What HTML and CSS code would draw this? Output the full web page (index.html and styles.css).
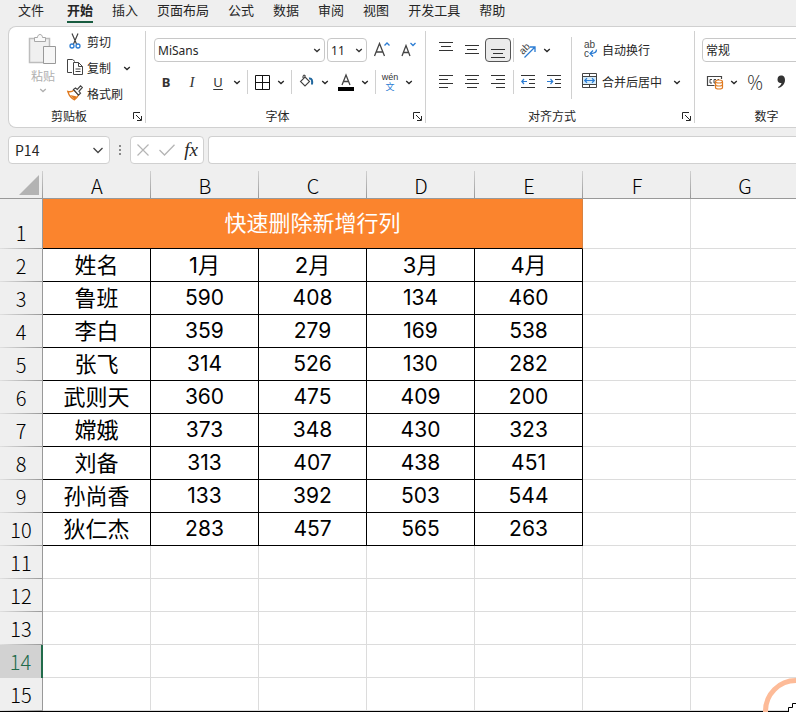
FILE: index.html
```html
<!DOCTYPE html>
<html lang="zh-CN">
  <head>
    <meta charset="UTF-8" />
    <meta name="viewport" content="width=device-width, initial-scale=1.0" />
    <title>工作簿</title>
    <link rel="stylesheet" href="styles.css">
  </head>
  <body>
    <svg class="defs" aria-hidden="true">
      <symbol id="chevron" viewBox="0 0 8 5"><path d="M1.2 1 4 3.6 6.8 1" fill="none" stroke="currentColor" stroke-width="1.3" /></symbol>
      <symbol id="launcher" viewBox="0 0 9 9"><path d="M.5 7V.5H7M3 3l5 5M8.500 4v4.500H4" fill="none" stroke="currentColor" /></symbol>
    </svg>

    <nav class="tabs">
      <a href="#" class="file">文件</a>
      <a href="#" class="active">开始</a>
      <a href="#">插入</a>
      <a href="#">页面布局</a>
      <a href="#">公式</a>
      <a href="#">数据</a>
      <a href="#">审阅</a>
      <a href="#">视图</a>
      <a href="#">开发工具</a>
      <a href="#">帮助</a>
    </nav>

    <div class="ribbon">
      <section class="group">
        <div class="clipboard">
          <button class="paste" disabled>
            <svg width="28" height="32" viewBox="0 0 28 32" fill="#f0f0f0" stroke="#a8a8a8">
              <path d="M.5 4.500h20v24H.5z" stroke-width="1.500" stroke="#bdbdbd" />
              <path d="M5.500 7.500v-4h3c0-4 5-4 5 0h3v4z" fill="#fafafa" />
              <path d="M14.500 12.500h12v17h-12z" fill="#f6f6f6" stroke="#999" />
            </svg>
            <span>粘贴</span>
            <svg class="chev" width="8" height="5"><use href="#chevron" /></svg>
          </button>
          <div class="commands">
            <button class="command">
              <svg width="16" height="16" viewBox="0 0 16 16" fill="none">
                <path d="M5 .5 9.500 11M11 .5 6.500 11" stroke="#444" stroke-width="1.200" />
                <circle cx="5" cy="13" r="2" stroke="#2b7cd3" stroke-width="1.300" />
                <circle cx="11" cy="13" r="2" stroke="#2b7cd3" stroke-width="1.300" />
              </svg>
              剪切
            </button>
            <div class="pair">
              <button class="command">
                <svg width="16" height="16" viewBox="0 0 16 16" fill="none" stroke="#444">
                  <path d="M5 13.500H.5V.5H5.500L8 2.500" />
                  <path d="M6.500 3.500h5l4 4v8h-9zM11.500 3.500v4h4M8.500 10h5M8.500 12.500h5" />
                </svg>
                复制
              </button>
              <button class="drop" aria-label="复制选项"><svg class="chev" width="8" height="5"><use href="#chevron" /></svg></button>
            </div>
            <button class="command">
              <svg width="16" height="16" viewBox="0 0 16 16">
                <path d="M.8 6.500C4 7.300 5.500 6.500 7 5l4.500 5c-1 2-2.500 3.800-4 4.800C4.500 13.500 2 10.500.8 6.500z" fill="#fff" stroke="#e07a1f" stroke-width="1.300" />
                <path d="M3 10l7 1.500-2.500 3.300z" fill="#e07a1f" />
                <path d="M6.500 4.500 8.500 3l1.800 1.500L13.500.8l1.800 1.700L12 6.300l1.500 1.900-2 2z" fill="#fff" stroke="#444" stroke-width="1.200" />
              </svg>
              格式刷
            </button>
          </div>
        </div>
        <footer>
          <span>剪贴板</span>
          <button class="launcher" aria-label="剪贴板设置"><svg width="9" height="9"><use href="#launcher" /></svg></button>
        </footer>
      </section>

      <section class="group">
        <div class="rows font-rows">
          <div class="row">
            <select class="font-name" aria-label="字体名称"><option>MiSans</option></select>
            <select class="font-size" aria-label="字号"><option>11</option></select>
            <button class="tool" aria-label="增大字号">
              <svg width="18" height="18" viewBox="0 0 18 18" fill="none">
                <path d="M1.500 15 6.500 2.500 11.500 15M3.300 11h6.400" stroke="#444" stroke-width="1.300" />
                <path d="M11.500 4.500 14 2l2.500 2.500" stroke="#2b7cd3" stroke-width="1.300" />
              </svg>
            </button>
            <button class="tool" aria-label="减小字号">
              <svg width="18" height="18" viewBox="0 0 18 18" fill="none">
                <path d="M3 15 7 4.500 11 15M4.500 11.500h5" stroke="#444" stroke-width="1.300" />
                <path d="M11.500 2 14 4.500 16.500 2" stroke="#2b7cd3" stroke-width="1.300" />
              </svg>
            </button>
          </div>
          <div class="row">
            <button class="tool bold">B</button>
            <button class="tool italic">I</button>
            <button class="tool underline">U</button>
            <button class="drop" aria-label="下划线选项"><svg class="chev" width="8" height="5"><use href="#chevron" /></svg></button>
            <i class="divider"></i>
            <button class="tool" aria-label="边框">
              <svg width="15" height="15" viewBox="0 0 15 15" fill="none" stroke="#111"><path d="M.5.5h14v14H.5zM7.500.5v14M.5 7.500h14" /></svg>
            </button>
            <button class="drop" aria-label="边框选项"><svg class="chev" width="8" height="5"><use href="#chevron" /></svg></button>
            <i class="divider"></i>
            <button class="tool" aria-label="填充颜色">
              <svg width="16" height="16" viewBox="0 0 16 16" fill="none">
                <path d="M7 1v3M7 3l4.500 4.500L7 12 2.500 7.500zM7 3c0-3-2.500-2-2 1" stroke="#444" stroke-width="1.100" />
                <path d="M11 4.500c3-.5 3.500 2 3 6" stroke="#21679e" stroke-width="2" />
              </svg>
            </button>
            <button class="drop" aria-label="填充颜色选项"><svg class="chev" width="8" height="5"><use href="#chevron" /></svg></button>
            <button class="tool" aria-label="字体颜色">
              <svg width="16" height="18" viewBox="0 0 16 18">
                <path d="M4 12 8 2 12 12M5.500 8.500h5" fill="none" stroke="#444" stroke-width="1.300" />
                <path d="M0 14h16v4H0z" fill="#000" />
              </svg>
            </button>
            <button class="drop" aria-label="字体颜色选项"><svg class="chev" width="8" height="5"><use href="#chevron" /></svg></button>
            <i class="divider"></i>
            <button class="tool pinyin"><span>wén</span><b>文</b></button>
            <button class="drop" aria-label="拼音选项"><svg class="chev" width="8" height="5"><use href="#chevron" /></svg></button>
          </div>
        </div>
        <footer>
          <span>字体</span>
          <button class="launcher" aria-label="字体设置"><svg width="9" height="9"><use href="#launcher" /></svg></button>
        </footer>
      </section>

      <section class="group">
        <div class="align">
          <div class="rows align-rows">
            <div class="row">
              <button class="tool" aria-label="顶端对齐">
                <svg width="14" height="16" viewBox="0 0 14 16" stroke="#333"><path d="M0 .5h14M2 4.500h10M0 8.500h14" /></svg>
              </button>
              <button class="tool" aria-label="垂直居中">
                <svg width="14" height="16" viewBox="0 0 14 16" stroke="#333"><path d="M0 3.500h14M2 7.500h10M0 11.500h14" /></svg>
              </button>
              <button class="tool pressed" aria-label="底端对齐">
                <svg width="14" height="16" viewBox="0 0 14 16" stroke="#333"><path d="M0 7.500h14M2 11.500h10M0 15.500h14" /></svg>
              </button>
              <i class="divider"></i>
              <button class="tool" aria-label="方向">
                <svg width="18" height="18" viewBox="0 0 18 18">
                  <text class="icon-text" x="1" y="11" transform="rotate(-45 6 9)">ab</text>
                  <path d="M5.500 16.500 15.500 6.500M11 6h5v5" fill="none" stroke="#2b7cd3" stroke-width="1.300" />
                </svg>
              </button>
              <button class="drop" aria-label="方向选项"><svg class="chev" width="8" height="5"><use href="#chevron" /></svg></button>
            </div>
            <div class="row">
              <button class="tool" aria-label="左对齐">
                <svg width="14" height="14" viewBox="0 0 14 14" stroke="#333"><path d="M0 .5h14M0 4.500h9M0 8.500h14M0 12.500h9" /></svg>
              </button>
              <button class="tool" aria-label="居中">
                <svg width="14" height="14" viewBox="0 0 14 14" stroke="#333"><path d="M0 .5h14M2 4.500h10M0 8.500h14M2 12.500h10" /></svg>
              </button>
              <button class="tool" aria-label="右对齐">
                <svg width="14" height="14" viewBox="0 0 14 14" stroke="#333"><path d="M0 .5h14M5 4.500h9M0 8.500h14M5 12.500h9" /></svg>
              </button>
              <i class="divider"></i>
              <button class="tool" aria-label="减少缩进量">
                <svg width="14" height="14" viewBox="0 0 14 14" fill="none" stroke="#333"><path d="M0 .5h14M8 4.500h6M8 8.500h6M0 12.500h14" /><path d="M6 6.500H1M3 4 .8 6.500 3 9" stroke="#2b7cd3" stroke-width="1.200" /></svg>
              </button>
              <button class="tool" aria-label="增加缩进量">
                <svg width="14" height="14" viewBox="0 0 14 14" fill="none" stroke="#333"><path d="M0 .5h14M8 4.500h6M8 8.500h6M0 12.500h14" /><path d="M0 6.500h5M3.500 4l2.200 2.500L3.500 9" stroke="#2b7cd3" stroke-width="1.200" /></svg>
              </button>
            </div>
          </div>
          <div class="rows wrap-merge">
            <div class="row">
              <button class="command">
                <svg width="16" height="20" viewBox="0 0 16 20">
                  <text class="icon-text" x="2" y="9">ab</text>
                  <text class="icon-text" x="2" y="18">c</text>
                  <path d="M14.500 10.500c0 3-2 4-6 4M11 11.500l-3 3 3 3" fill="none" stroke="#2b7cd3" stroke-width="1.300" />
                </svg>
                自动换行
              </button>
            </div>
            <div class="row">
              <button class="command">
                <svg width="16" height="16" viewBox="0 0 16 16" fill="none">
                  <path d="M.5 3.500h14v8H.5z" fill="#d5ecfb" />
                  <path d="M.5.5h14v14H.5zM.5 3.500h14M.5 11.500h14M7.500.5v3M7.500 11.500v3" stroke="#444" />
                  <path d="M3 7.500h9M5 5.300 2.700 7.500 5 9.700M10 5.300l2.300 2.200L10 9.700" stroke="#2b7cd3" stroke-width="1.200" />
                </svg>
                合并后居中
              </button>
              <button class="drop" aria-label="合并选项"><svg class="chev" width="8" height="5"><use href="#chevron" /></svg></button>
            </div>
          </div>
        </div>
        <footer>
          <span>对齐方式</span>
          <button class="launcher" aria-label="对齐设置"><svg width="9" height="9"><use href="#launcher" /></svg></button>
        </footer>
      </section>

      <section class="group number-group">
        <div class="rows">
          <div class="row">
            <select class="number-format" aria-label="数字格式"><option>常规</option></select>
          </div>
          <div class="row">
            <button class="tool" aria-label="会计数字格式">
              <svg width="18" height="16" viewBox="0 0 18 16" fill="none">
                <path d="M8.500 11.500h-7v-9h14V5" stroke="#444" stroke-width="1.200" />
                <path d="M6 5.500H4v3.500h2M10 5.500H8V9h1M13 5.500h-1.500" stroke="#444" />
                <path d="M9.500 8v5.500c0 2 7 2 7 0V8" fill="#fff" stroke="#e07a1f" stroke-width="1.200" />
                <ellipse cx="13" cy="7.500" rx="3.500" ry="1.500" fill="#fff" stroke="#e07a1f" stroke-width="1.200" />
                <path d="M9.500 10.500c0 2 7 2 7 0" stroke="#e07a1f" stroke-width="1.200" />
              </svg>
            </button>
            <button class="drop" aria-label="会计格式选项"><svg class="chev" width="8" height="5"><use href="#chevron" /></svg></button>
            <button class="tool percent">%</button>
            <button class="tool" aria-label="千位分隔样式">
              <svg width="10" height="14" viewBox="0 0 10 14"><path d="M5 .5c3 0 4 2 4 4.500C9 9 6 12 2.500 13l-.5-1c2-1 3.300-2.500 3.500-4C3 8.500 1.500 7 1.500 4.500 1.500 2 3 .5 5 .5z" fill="#333" /></svg>
            </button>
            <i class="divider"></i>
          </div>
        </div>
        <footer>
          <span>数字</span>
          <button class="launcher" aria-label="数字设置"><svg width="9" height="9"><use href="#launcher" /></svg></button>
        </footer>
      </section>
    </div>

    <div class="formula-bar">
      <div class="name-box">
        <input type="text" value="P14" aria-label="名称框" />
        <button aria-label="名称列表">
          <svg width="12" height="7" viewBox="0 0 12 7"><path d="M1.500 1 6 5.500 10.500 1" fill="none" stroke="#444" stroke-width="1.300" /></svg>
        </button>
      </div>
      <svg class="grip" width="2" height="12" viewBox="0 0 2 12"><path d="M0 1h2v2H0zM0 5h2v2H0zM0 9h2v2H0z" fill="#8a8a8a" /></svg>
      <div class="entry-buttons">
        <button aria-label="取消"><svg width="12" height="12" viewBox="0 0 12 12"><path d="M.5.5l11 11M11.500.5l-11 11" stroke="#b5b5b5" stroke-width="1.200" /></svg></button>
        <button aria-label="输入"><svg width="16" height="12" viewBox="0 0 16 12"><path d="M.5 6 5.500 11 15.500.8" fill="none" stroke="#b5b5b5" stroke-width="1.300" /></svg></button>
        <button class="fx">fx</button>
      </div>
      <input class="formula" type="text" aria-label="编辑栏" />
    </div>

    <main class="sheet">
      <table>
        <colgroup>
          <col class="col-head" />
          <col span="7" />
        </colgroup>
        <thead>
          <tr>
            <th class="corner"><svg width="20" height="20" viewBox="0 0 20 20"><path d="M20 0v20H0z" fill="#b3b3b3" /></svg></th>
            <th>A</th><th>B</th><th>C</th><th>D</th><th>E</th><th>F</th><th>G</th>
          </tr>
        </thead>
        <tbody>
          <tr class="title-row"><th>1</th><td class="title" colspan="5">快速删除新增行列</td><td></td><td></td></tr>
          <tr class="data heading"><th>2</th><td>姓名</td><td>1月</td><td>2月</td><td>3月</td><td>4月</td><td></td><td></td></tr>
          <tr class="data"><th>3</th><td>鲁班</td><td>590</td><td>408</td><td>134</td><td>460</td><td></td><td></td></tr>
          <tr class="data"><th>4</th><td>李白</td><td>359</td><td>279</td><td>169</td><td>538</td><td></td><td></td></tr>
          <tr class="data"><th>5</th><td>张飞</td><td>314</td><td>526</td><td>130</td><td>282</td><td></td><td></td></tr>
          <tr class="data"><th>6</th><td>武则天</td><td>360</td><td>475</td><td>409</td><td>200</td><td></td><td></td></tr>
          <tr class="data"><th>7</th><td>嫦娥</td><td>373</td><td>348</td><td>430</td><td>323</td><td></td><td></td></tr>
          <tr class="data"><th>8</th><td>刘备</td><td>313</td><td>407</td><td>438</td><td>451</td><td></td><td></td></tr>
          <tr class="data"><th>9</th><td>孙尚香</td><td>133</td><td>392</td><td>503</td><td>544</td><td></td><td></td></tr>
          <tr class="data"><th>10</th><td>狄仁杰</td><td>283</td><td>457</td><td>565</td><td>263</td><td></td><td></td></tr>
          <tr><th>11</th><td></td><td></td><td></td><td></td><td></td><td></td><td></td></tr>
          <tr><th>12</th><td></td><td></td><td></td><td></td><td></td><td></td><td></td></tr>
          <tr><th>13</th><td></td><td></td><td></td><td></td><td></td><td></td><td></td></tr>
          <tr class="selected"><th>14</th><td></td><td></td><td></td><td></td><td></td><td></td><td></td></tr>
          <tr><th>15</th><td></td><td></td><td></td><td></td><td></td><td></td><td></td></tr>
        </tbody>
      </table>
    </main>

    <!-- click ring with the cell cursor inside -->
    <svg class="pointer" width="34" height="35" viewBox="0 0 34 35" aria-hidden="true">
      <circle cx="34" cy="34" r="30.500" fill="none" stroke="#fdbb98" stroke-width="5" />
      <path d="M26.500 35v-4.500h4v-4H34V35z" fill="#fff" />
      <path d="M26.500 35v-4.500h4v-4H34" fill="none" stroke="#000" />
    </svg>
  </body>
</html>
```
FILE: styles.css
```css
* {
  box-sizing: border-box;
}

body {
  margin: 0;
  background: #efefef;
  color: #262626;
  font-family: "Noto Sans CJK SC", sans-serif;
  font-size: 12px;
  overflow: hidden;
}

button {
  display: flex;
  align-items: center;
  justify-content: center;
  padding: 0;
  border: none;
  background: none;
  color: inherit;
  font: inherit;
  white-space: nowrap;
}

svg {
  display: block;
  flex-shrink: 0;
  overflow: visible;
}

.defs {
  position: absolute;
  width: 0;
  height: 0;
}

/* tabs */
.tabs {
  display: flex;
  gap: 19px;
  height: 26px;
  padding-left: 18px;
}

.tabs a {
  height: 23px;
  color: #262626;
  font-size: 13px;
  line-height: 20px;
  text-decoration: none;
  white-space: nowrap;
}

.tabs .file {
  margin-right: 4px;
}

.tabs .active {
  border-bottom: 2px solid #185c40;
  font-weight: bold;
}

/* ribbon */
.ribbon {
  display: flex;
  margin-left: 8px;
  padding: 4px 0;
  border: 1px solid #d0d0d0;
  border-right: none;
  border-radius: 8px 0 0 8px;
  background: #fff;
  overflow: hidden;
}

.group {
  display: flex;
  flex-direction: column;
  flex-shrink: 0;
  border-right: 1px solid #d0d0d0;
}

.number-group {
  width: 160px;
}

.group footer {
  display: flex;
  align-items: center;
  margin-top: auto;
}

.group footer span {
  flex: 1;
  line-height: 14px;
  text-align: center;
}

.launcher {
  width: 16px;
  height: 14px;
}

.clipboard {
  display: flex;
  gap: 10px;
  height: 78px;
  padding: 0 10px 0 20px;
}

.paste {
  flex-direction: column;
  justify-content: flex-start;
  padding-top: 3px;
  color: #b0b0b0;
}

.paste span {
  line-height: 20px;
}

.paste .chev {
  margin-top: 2px;
}

.commands {
  display: flex;
  flex-direction: column;
  align-items: flex-start;
  gap: 4px;
}

.command {
  gap: 4px;
  height: 22px;
  padding-bottom: 2px;
}

.pair {
  display: flex;
  gap: 10px;
}

.rows {
  display: flex;
  flex-direction: column;
  gap: 8px;
  height: 78px;
  padding: 7px 7px 0;
}

.font-rows,
.align-rows {
  padding-right: 4px;
}

.row {
  display: flex;
  align-items: center;
  height: 24px;
}

.tool {
  width: 26px;
  height: 24px;
  color: #333;
}

.drop {
  width: 12px;
  height: 22px;
  margin-right: 2px;
}

.divider {
  width: 1px;
  height: 24px;
  margin: 0 1px 0 2px;
  background: #d0d0d0;
}

select {
  height: 24px;
  padding: 0 3px;
  border: 1px solid #c8c8c8;
  border-radius: 4px;
  appearance: none;
  background: #fff url("data:image/svg+xml,%3Csvg xmlns='http://www.w3.org/2000/svg' width='8' height='5'%3E%3Cpath d='M1.200 1 4 3.600 6.800 1' fill='none' stroke='%23333' stroke-width='1.300'/%3E%3C/svg%3E") no-repeat right 3px center;
  color: #262626;
  font-family: "Noto Sans", "Noto Sans CJK SC", sans-serif;
  font-size: 12px;
}

.font-name {
  width: 171px;
  margin: 0 2px 0 1px;
}

.font-size {
  width: 40px;
  margin-right: 2px;
}

.number-format {
  width: 100%;
}

.bold,
.underline {
  font-family: "Noto Sans", sans-serif;
  font-size: 13px;
}

.bold {
  font-weight: bold;
}

.italic {
  font-family: "Liberation Serif", serif;
  font-size: 15px;
  font-style: italic;
}

.underline {
  text-decoration: underline;
  text-underline-offset: 2px;
}

.percent {
  font-family: "Open Sans", sans-serif;
  font-size: 20px;
  font-weight: 300;
}

.pinyin {
  flex-direction: column;
  font-size: 9px;
  line-height: 9px;
}

.pinyin span {
  font-family: "Liberation Sans", sans-serif;
}

.pinyin b {
  color: #2b7cd3;
  font-weight: normal;
}

.pressed {
  border: 1px solid #555;
  border-radius: 4px;
  background: #ebebeb;
}

.icon-text {
  fill: #444;
  font-family: "Liberation Sans", sans-serif;
  font-size: 10px;
}

.align {
  display: flex;
}

.wrap-merge {
  height: 62px;
  margin-top: 6px;
  padding: 1px 9px 0 10px;
  border-left: 1px solid #d0d0d0;
}

.wrap-merge .drop {
  margin-left: 9px;
}

/* formula bar */
.formula-bar {
  display: flex;
  align-items: center;
  height: 43px;
  padding: 8px 0 7px 8px;
}

.name-box,
.entry-buttons,
.formula {
  height: 28px;
  border: 1px solid #d0d0d0;
  border-radius: 4px;
  background: #fff;
}

.name-box {
  display: flex;
  width: 102px;
}

.name-box input {
  flex: 1;
  min-width: 0;
  padding: 0 6px;
  border: none;
  background: none;
  color: #262626;
  font-family: "Noto Sans CJK SC", sans-serif;
  font-size: 14px;
}

.name-box button {
  width: 22px;
}

.grip {
  margin: 0 9px;
}

.entry-buttons {
  display: flex;
  width: 74px;
  margin-right: 4px;
}

.entry-buttons button {
  flex: 1;
}

.entry-buttons .fx {
  font-family: "Liberation Serif", serif;
  font-size: 19px;
  font-style: italic;
}

.formula {
  flex: 1;
  min-width: 0;
  border-right: none;
  border-radius: 4px 0 0 4px;
}

/* sheet */
.sheet {
  border-bottom: 1px solid #000;
  overflow: hidden;
}

table {
  width: 799px;
  min-width: 100%;
  table-layout: fixed;
  border-collapse: separate;
  border-spacing: 0;
  background: #fff;
  color: #000;
}

.col-head {
  width: 43px;
}

th {
  padding: 0;
  background: #efefef;
  font-size: 20px;
  font-weight: 300;
  line-height: 32px;
  vertical-align: bottom;
}

thead th {
  height: 28px;
  background:
    linear-gradient(#d0d0d0, #999) right / 1px 100% no-repeat,
    #efefef;
  border-bottom: 1px solid #999;
  line-height: 24px;
}

thead .corner svg {
  margin: 0 0 3px 19px;
}

tbody th {
  height: 33px;
  border-right: 1px solid #999;
  background:
    linear-gradient(to right, #e0e0e0, #999) bottom / 100% 1px no-repeat,
    #efefef;
}

td {
  padding: 0;
  border-right: 1px solid #dcdcdc;
  border-bottom: 1px solid #dcdcdc;
  font-family: "Inter", "Noto Sans CJK SC", sans-serif;
  font-size: 21px;
  line-height: 30px;
  text-align: center;
}

.title-row th {
  height: 50px;
}

.title {
  padding-bottom: 2px;
  border-right-color: #d88240;
  border-bottom-color: #000;
  background: #fb842d;
  color: #fff;
  font-size: 22px;
}

.data td:nth-child(-n + 6) {
  border-color: #000;
}

.data td:nth-child(2),
.heading td {
  font-size: 22px;
}

.selected th {
  border-right: 2px solid #216b4a;
  background: #d2d2d2;
  color: #216b4a;
}

.pointer {
  position: fixed;
  right: 0;
  bottom: 0;
  overflow: hidden;
}
```
